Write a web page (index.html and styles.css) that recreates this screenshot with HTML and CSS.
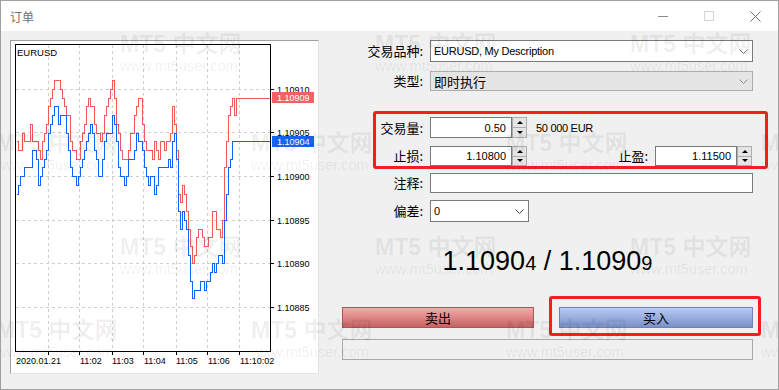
FILE: index.html
```html
<!DOCTYPE html>
<html lang="zh-CN">
<head>
    <meta charset="UTF-8">
    <meta name="viewport" content="width=device-width, initial-scale=1.0">
    <link rel="stylesheet" href="styles.css">
</head>
<body>
    <div class="window">
        <div class="titlebar">
            <span class="title">订单</span>
            <div class="controls">
                <span class="ctl"><svg width="10" height="10" viewBox="0 0 10 10"><path d="M0 5.5H10" stroke="#8a8a8a"/></svg></span>
                <span class="ctl"><svg width="10" height="10" viewBox="0 0 10 10"><rect x="0.5" y="0.5" width="9" height="9" fill="none" stroke="#d4d4d4"/></svg></span>
                <span class="ctl"><svg width="11" height="11" viewBox="0 0 11 11"><path d="M0.5 0.5L10.5 10.5M10.5 0.5L0.5 10.5" stroke="#6e6e6e"/></svg></span>
            </div>
        </div>

        <div class="content">
            <div class="chart-panel">
                <svg class="chart" width="307" height="332" viewBox="11 41 307 332" shape-rendering="crispEdges">
                    <rect x="15.5" y="44.5" width="255" height="307" fill="#fff" stroke="#000"/>
                    <g class="grid">
                        <path d="M48.5 45V351M79.5 45V351M112.5 45V351M143.5 45V351M176.5 45V351M207.5 45V351M239.5 45V351"/>
                        <path d="M16 89.5H270M16 132.5H270M16 176.5H270M16 220.5H270M16 263.5H270M16 307.5H270"/>
                    </g>
                    <path class="ticks" d="M270 89.5H274M270 132.5H274M270 176.5H274M270 220.5H274M270 263.5H274M270 307.5H274M48.5 351V355M79.5 351V355M112.5 351V355M143.5 351V355M176.5 351V355M207.5 351V355M239.5 351V355"/>

                    <path id="askLine" class="ask" d=""/>
                    <path id="bidLine" class="bid" d=""/>

                    <text class="axis symbol" x="17" y="56">EURUSD</text>

                    <text class="axis" x="277" y="92.5">1.10910</text>
                    <text class="axis" x="277" y="135.5">1.10905</text>
                    <text class="axis" x="277" y="179.5">1.10900</text>
                    <text class="axis" x="277" y="223.5">1.10895</text>
                    <text class="axis" x="277" y="266.5">1.10890</text>
                    <text class="axis" x="277" y="310.5">1.10885</text>

                    <rect x="272" y="92" width="42" height="11" fill="#f26262"/>
                    <text class="axis tag" x="277" y="101">1.10909</text>
                    <rect x="272" y="136" width="42" height="11" fill="#1466f2"/>
                    <text class="axis tag" x="277" y="145">1.10904</text>

                    <text class="axis" x="16" y="364">2020.01.21</text>
                    <text class="axis" x="80" y="364">11:02</text>
                    <text class="axis" x="112" y="364">11:03</text>
                    <text class="axis" x="144" y="364">11:04</text>
                    <text class="axis" x="176" y="364">11:05</text>
                    <text class="axis" x="208" y="364">11:06</text>
                    <text class="axis" x="240" y="364">11:10:02</text>
                </svg>
            </div>

            <div class="order-form">
                <div class="row row-symbol">
                    <span class="lbl">交易品种:</span>
                    <div class="combo combo-wide">
                        <span class="combo-text">EURUSD, My Description</span>
                        <svg width="9" height="5" viewBox="0 0 9 5"><path d="M0.5 0.5L4.5 4.5L8.5 0.5" fill="none" stroke="#7a7a7a"/></svg>
                    </div>
                </div>
                <div class="row row-type">
                    <span class="lbl">类型:</span>
                    <div class="combo combo-wide combo-gray">
                        <span class="combo-text cjk">即时执行</span>
                        <svg width="9" height="5" viewBox="0 0 9 5"><path d="M0.5 0.5L4.5 4.5L8.5 0.5" fill="none" stroke="#8c8c8c"/></svg>
                    </div>
                </div>

                <div class="highlight levels">
                    <div class="row row-volume">
                        <span class="lbl lbl-short">交易量:</span>
                        <div class="num">0.50</div>
                        <div class="spin"><span class="up"></span><span class="down"></span></div>
                        <span class="note">50 000 EUR</span>
                    </div>
                    <div class="row row-stops">
                        <span class="lbl lbl-short">止损:</span>
                        <div class="num">1.10800</div>
                        <div class="spin"><span class="up"></span><span class="down"></span></div>
                        <span class="lbl lbl-fill">止盈:</span>
                        <div class="num">1.11500</div>
                        <div class="spin"><span class="up"></span><span class="down"></span></div>
                    </div>
                </div>

                <div class="row row-comment">
                    <span class="lbl">注释:</span>
                    <div class="text-field"></div>
                </div>
                <div class="row row-deviation">
                    <span class="lbl">偏差:</span>
                    <div class="combo combo-small">
                        <span class="combo-text">0</span>
                        <svg width="9" height="5" viewBox="0 0 9 5"><path d="M0.5 0.5L4.5 4.5L8.5 0.5" fill="none" stroke="#444"/></svg>
                    </div>
                </div>

                <div class="price">1.1090<small>4</small> / 1.1090<small>9</small></div>

                <div class="buttons">
                    <div class="btn btn-sell">卖出</div>
                    <div class="highlight buy-box">
                        <div class="btn btn-buy">买入</div>
                    </div>
                </div>
                <div class="progress"></div>
            </div>
        </div>

        <div class="watermarks">
            <div class="wm-row wm-a">
                <div class="wm"><span class="wm-big">MT5 中文网</span><span class="wm-small">www.mt5user.com</span></div>
                <div class="wm"><span class="wm-big">MT5 中文网</span><span class="wm-small">www.mt5user.com</span></div>
                <div class="wm"><span class="wm-big">MT5 中文网</span><span class="wm-small">www.mt5user.com</span></div>
            </div>
            <div class="wm-row wm-b">
                <div class="wm"><span class="wm-big">MT5 中文网</span><span class="wm-small">www.mt5user.com</span></div>
                <div class="wm"><span class="wm-big">MT5 中文网</span><span class="wm-small">www.mt5user.com</span></div>
                <div class="wm"><span class="wm-big">MT5 中文网</span><span class="wm-small">www.mt5user.com</span></div>
                <div class="wm"><span class="wm-big">MT5 中文网</span><span class="wm-small">www.mt5user.com</span></div>
            </div>
            <div class="wm-row wm-c">
                <div class="wm"><span class="wm-big">MT5 中文网</span><span class="wm-small">www.mt5user.com</span></div>
                <div class="wm"><span class="wm-big">MT5 中文网</span><span class="wm-small">www.mt5user.com</span></div>
                <div class="wm"><span class="wm-big">MT5 中文网</span><span class="wm-small">www.mt5user.com</span></div>
            </div>
            <div class="wm-row wm-d">
                <div class="wm"><span class="wm-big">MT5 中文网</span><span class="wm-small">www.mt5user.com</span></div>
                <div class="wm"><span class="wm-big">MT5 中文网</span><span class="wm-small">www.mt5user.com</span></div>
                <div class="wm"><span class="wm-big">MT5 中文网</span><span class="wm-small">www.mt5user.com</span></div>
                <div class="wm"><span class="wm-big">MT5 中文网</span><span class="wm-small">www.mt5user.com</span></div>
            </div>
        </div>
    </div>

    <script>
        // rough tick shape, in screen pixels of the chart
        const bidPoints = [[16,185],[19,178],[22,172],[25,165],[28,170],[31,160],[34,150],[37,175],[40,182],[43,168],[46,150],[49,125],[52,116],[55,110],[58,118],[61,110],[64,125],[67,140],[70,165],[73,175],[76,185],[79,180],[82,160],[85,150],[88,135],[91,125],[94,150],[97,172],[100,168],[103,150],[106,135],[109,128],[112,120],[115,140],[118,160],[121,178],[124,185],[127,170],[130,160],[133,150],[136,138],[139,130],[142,150],[145,172],[148,180],[151,178],[154,185],[157,178],[160,172],[163,172],[166,165],[169,165],[172,150],[175,120],[177,205],[180,225],[183,215],[186,235],[189,270],[192,305],[195,285],[198,292],[201,280],[204,290],[207,278],[210,270],[213,265],[216,268],[219,262],[222,268],[225,200],[228,160],[231,148],[234,135],[238,141]];
        const askPoints = [[16,150],[19,150],[22,140],[25,145],[28,135],[31,128],[34,140],[37,150],[40,158],[43,140],[46,122],[49,95],[52,82],[55,85],[58,80],[61,88],[64,100],[67,115],[70,140],[73,150],[76,160],[79,150],[82,135],[85,120],[88,100],[91,98],[94,122],[97,140],[100,140],[103,118],[106,105],[109,95],[112,88],[115,110],[118,130],[121,150],[124,160],[127,148],[130,135],[133,125],[136,112],[139,100],[142,125],[145,148],[148,150],[151,150],[154,150],[157,148],[160,150],[163,150],[166,148],[169,140],[172,105],[175,130],[177,185],[180,200],[183,190],[186,210],[189,235],[192,268],[195,235],[198,230],[201,228],[204,240],[207,245],[210,230],[213,202],[216,230],[219,228],[222,225],[225,150],[228,110],[231,100],[234,108],[238,97]];

        // 1 point = 8.72px, 1.10880 sits on the bottom edge
        const toPips = y => (350.6 - y) / 8.72;
        const toY = v => Math.round(350.6 - v * 8.72) + 0.5;

        let seed = 7;
        function rand() {
            seed = (seed * 16807) % 2147483647;
            return seed / 2147483647;
        }

        function sample(points, x) {
            for (let i = 0; i < points.length - 1; i++) {
                const a = points[i], b = points[i + 1];
                if (x >= a[0] && x <= b[0]) {
                    return a[1] + (b[1] - a[1]) * (x - a[0]) / (b[0] - a[0]);
                }
            }
            return points[points.length - 1][1];
        }

        let bid = "", ask = "";
        for (let x = 16; x <= 236; x += 2) {
            const b = Math.round(toPips(sample(bidPoints, x)) + (rand() - 0.5) * 1.6);
            let a = Math.round(toPips(sample(askPoints, x)) + (rand() - 0.5) * 1.6);
            if (a <= b) a = b + 1;
            if (x === 16) {
                bid = "M16.5 " + toY(b);
                ask = "M16.5 " + toY(a);
            } else {
                bid += " H" + (x + 0.5) + " V" + toY(b);
                ask += " H" + (x + 0.5) + " V" + toY(a);
            }
        }
        bid += " H238.5 V" + toY(24) + " H270";
        ask += " H238.5 V" + toY(29) + " H270";

        document.getElementById("bidLine").setAttribute("d", bid);
        document.getElementById("askLine").setAttribute("d", ask);
    </script>
</body>
</html>
```

FILE: styles.css
```css
* {
    box-sizing: border-box;
}

body {
    margin: 0;
    background: #fff;
    font-family: "Liberation Sans", "Noto Sans CJK SC", sans-serif;
    color: #000;
}

.window {
    position: relative;
    width: 779px;
    height: 390px;
    border: 1px solid #a0a0a0;
    background: #f0f0f0;
    overflow: hidden;
}

/* title bar */
.titlebar {
    height: 30px;
    background: #fff;
    display: flex;
    align-items: center;
    justify-content: space-between;
    padding-left: 9px;
}

.title {
    font-family: "Noto Sans CJK SC", sans-serif;
    font-size: 12px;
    color: #707070;
}

.controls {
    display: flex;
    height: 100%;
}

.ctl {
    width: 46px;
    display: flex;
    align-items: center;
    justify-content: center;
}

.ctl svg {
    display: block;
}

.content {
    display: flex;
    height: 358px;
    padding: 9px 0 0 9px;
}

/* chart */
.chart-panel {
    width: 309px;
    height: 334px;
    background: #fff;
    border: 1px solid;
    border-color: #a0a0a0 #e2e2e2 #e2e2e2 #a0a0a0;
}

.chart {
    display: block;
}

.grid path {
    stroke: #cfcfcf;
    stroke-dasharray: 3 3;
    fill: none;
}

.ticks {
    stroke: #000;
    fill: none;
}

.ask,
.bid {
    fill: none;
    stroke-width: 1;
}

.ask {
    stroke: #f25a5a;
}

.bid {
    stroke: #0f62fe;
}

.axis {
    font-family: "Liberation Sans", sans-serif;
    font-size: 9px;
    fill: #000;
}

.axis.symbol {
    font-size: 9.5px;
}

.axis.tag {
    fill: #fff;
}

/* order form */
.order-form {
    flex: 1;
    margin-left: 11px;
    display: flex;
    flex-direction: column;
    align-items: flex-start;
}

.row {
    display: flex;
    align-items: center;
}

.lbl {
    width: 93px;
    margin-right: 7px;
    text-align: right;
    font-family: "Noto Sans CJK SC", sans-serif;
    font-size: 13px;
    line-height: 16px;
    white-space: nowrap;
}

.lbl-short {
    width: 47px;
}

.lbl-fill {
    flex: 1;
}

.row-symbol {
    height: 22px;
}

.row-type {
    height: 20px;
    margin-top: 9px;
}

.highlight {
    border: 3px solid #f41e1e;
    border-radius: 3px;
}

.levels {
    margin-top: 20px;
    margin-left: 43px;
    width: 395px;
    padding: 3px 13px 0 0;
}

.levels .row {
    width: 100%;
}

.row-volume {
    height: 21px;
}

.row-stops {
    height: 20px;
    margin-top: 8px;
}

.row-comment {
    height: 20px;
    margin-top: 4px;
}

.row-deviation {
    height: 22px;
    margin-top: 7px;
}

.combo {
    height: 100%;
    display: flex;
    align-items: center;
    justify-content: space-between;
    padding: 0 4px 0 3px;
    background: #fff;
    border: 1px solid #7a7a7a;
}

.combo svg {
    display: block;
}

.combo-wide {
    width: 323px;
}

.combo-small {
    width: 99px;
}

.combo-gray {
    background: #e5e5e5;
    border-color: #adadad;
}

.combo-text {
    font-size: 11px;
    letter-spacing: -0.25px;
    white-space: nowrap;
}

.combo-text.cjk {
    font-family: "Noto Sans CJK SC", sans-serif;
    font-size: 13px;
    letter-spacing: 0;
}

.num {
    width: 82px;
    height: 100%;
    display: flex;
    align-items: center;
    justify-content: flex-end;
    padding-right: 5px;
    background: #fff;
    border: 1px solid #7a7a7a;
    font-size: 11px;
}

.spin {
    width: 15px;
    height: 100%;
    display: flex;
    flex-direction: column;
}

.spin span {
    flex: 1;
    display: flex;
    align-items: center;
    justify-content: center;
    background: #e5e5e5;
    border: 1px solid #adadad;
}

.spin .down {
    border-top: none;
}

.spin .up::after,
.spin .down::after {
    content: "";
    border-left: 3px solid transparent;
    border-right: 3px solid transparent;
}

.spin .up::after {
    border-bottom: 3px solid #000;
}

.spin .down::after {
    border-top: 3px solid #000;
}

.note {
    margin-left: 9px;
    font-size: 11px;
    letter-spacing: -0.3px;
}

.text-field {
    width: 323px;
    height: 100%;
    background: #fff;
    border: 1px solid #7a7a7a;
}

.price {
    width: 411px;
    margin: 23px 0 0 12px;
    text-align: center;
    font-size: 27px;
    line-height: 32px;
    white-space: nowrap;
}

.price small {
    font-size: 20px;
}

.buttons {
    display: flex;
    align-items: flex-start;
    height: 21px;
    margin: 28px 0 0 12px;
}

.btn {
    height: 21px;
    display: flex;
    align-items: center;
    justify-content: center;
    font-family: "Noto Sans CJK SC", sans-serif;
    font-size: 13px;
    border: 1px solid;
}

.btn-sell {
    width: 192px;
    background: linear-gradient(#f4a9a9, #c66363);
    border-color: #ad5656;
}

.buy-box {
    margin: -11px 0 -8px 15px;
    padding: 8px 5px 5px 7px;
}

.btn-buy {
    width: 194px;
    background: linear-gradient(#b7cbf3, #7a91c8);
    border-color: #6b83b7;
}

.progress {
    width: 411px;
    height: 21px;
    margin: 11px 0 0 12px;
    border: 1px solid #a8a8a8;
}

/* watermark overlay */
.watermarks {
    position: absolute;
    inset: 0;
    pointer-events: none;
    color: rgba(0, 0, 0, 0.07);
}

.wm-row {
    display: flex;
}

.wm-a {
    margin-top: 31px;
    padding-left: 119px;
}

.wm-b {
    margin-top: 57px;
    margin-left: -5px;
}

.wm-c {
    margin-top: 62px;
    padding-left: 119px;
}

.wm-d {
    margin-top: 41px;
    margin-left: -5px;
}

.wm {
    flex: 0 0 255px;
    display: flex;
    flex-direction: column;
}

.wm-big {
    font-weight: bold;
    font-size: 23px;
    line-height: 24px;
    white-space: nowrap;
}

.wm-small {
    margin-top: 2px;
    font-size: 14.5px;
    line-height: 16px;
    white-space: nowrap;
}
```
